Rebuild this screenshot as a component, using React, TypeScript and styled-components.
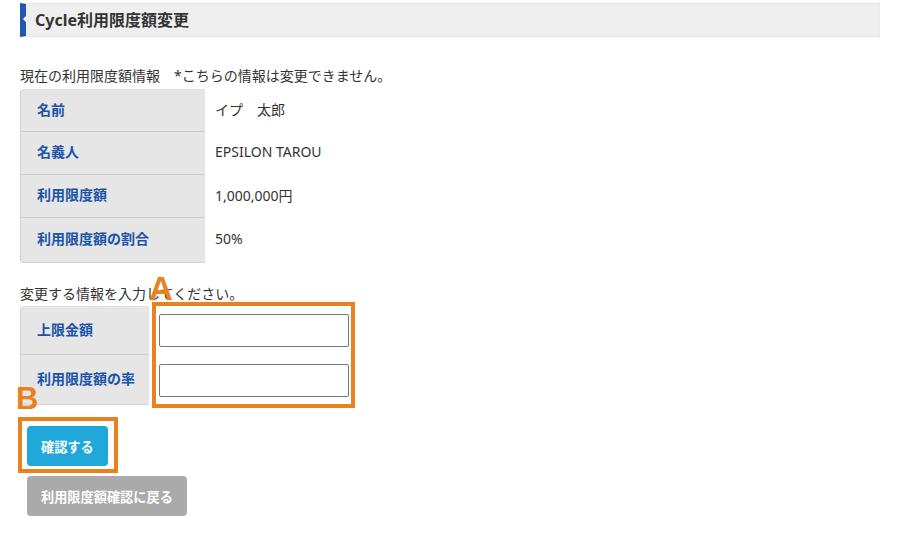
import React from "react";
import styled, { createGlobalStyle } from "styled-components";

const Global = createGlobalStyle`
  html, body { margin: 0; padding: 0; background: #fff; }
  body { font-family: "Noto Sans", "Noto Sans CJK JP", sans-serif; color: #333; }
  * { box-sizing: border-box; }
`;

const Page = styled.div`
  position: relative;
  width: 900px;
  padding: 3px 20px 0 20px;
`;

const Header = styled.div`
  position: relative;
  height: 34px;
  background: #efefef;
  border: 1px solid #e6e6e6;
  border-left: 6px solid #2356ad;
  display: flex;
  align-items: center;
  padding-left: 9px;
  padding-bottom: 1px;
  &::before {
    content: "";
    position: absolute;
    left: -3px;
    top: 12px;
    border-top: 3px solid transparent;
    border-bottom: 3px solid transparent;
    border-right: 3px solid #fff;
  }
`;

const Title = styled.h1`
  margin: 0;
  font-size: 16px;
  font-weight: 700;
  color: #333;
  line-height: 1;
`;

const Note = styled.p<{ $top: number }>`
  margin: ${(p) => p.$top}px 0 0 0;
  font-size: 14px;
  line-height: 20px;
  color: #333;
`;

const Table = styled.div<{ $label: number; $top: number }>`
  margin-top: ${(p) => p.$top}px;
  display: grid;
  grid-template-columns: ${(p) => p.$label}px 1fr;
`;

const Label = styled.div<{ $h: number; $first?: boolean; $last?: boolean }>`
  height: ${(p) => p.$h}px;
  background: #e6e6e6;
  border-left: 1px solid #d0d0d0;
  border-top: ${(p) => (p.$first ? "1px solid #e0e0e0" : "none")};
  border-bottom: 1px solid ${(p) => (p.$last ? "#d4d4d4" : "#cccccc")};
  border-radius: ${(p) => (p.$first ? "4px 0 0 0" : p.$last ? "0 0 0 4px" : "0")};
  display: flex;
  align-items: center;
  padding: 0 0 4px 16px;
  font-size: 14px;
  font-weight: 700;
  color: #1b54a6;
`;

const Value = styled.div<{ $h: number; $pad?: number }>`
  height: ${(p) => p.$h}px;
  display: flex;
  align-items: center;
  padding: 0 0 ${(p) => p.$pad ?? 4}px 10px;
  font-size: 14px;
  color: #333;
`;

const Input = styled.input`
  width: 190px;
  height: 33px;
  border: 1px solid #767676;
  border-radius: 2px;
  background: #fff;
  outline: none;
  padding: 0 6px;
`;

const Buttons = styled.div`
  margin-top: 21px;
  padding-left: 7px;
  display: flex;
  flex-direction: column;
  align-items: flex-start;
  gap: 10px;
`;

const Button = styled.button<{ $variant: "primary" | "back" }>`
  height: 40px;
  padding: 0 14px;
  border: none;
  border-radius: 4px;
  background: ${(p) => (p.$variant === "primary" ? "#21a8da" : "#aaaaaa")};
  color: #fff;
  font-family: "Noto Sans", "Noto Sans CJK JP", sans-serif;
  font-size: 13.2px;
  font-weight: 700;
  cursor: pointer;
`;

const Marker = styled.div<{ $x: number; $y: number; $w: number; $h: number }>`
  position: absolute;
  left: ${(p) => p.$x}px;
  top: ${(p) => p.$y}px;
  width: ${(p) => p.$w}px;
  height: ${(p) => p.$h}px;
  border: 4px solid #e8821e;
  pointer-events: none;
`;

const MarkerLetter = styled.span<{ $x: number; $y: number; $size: number }>`
  position: absolute;
  left: ${(p) => p.$x}px;
  top: ${(p) => p.$y}px;
  font-family: "Liberation Sans", Arial, sans-serif;
  font-weight: 700;
  font-size: ${(p) => p.$size}px;
  line-height: 1;
  color: #e8821e;
  pointer-events: none;
`;

const info = [
  { label: "名前", value: "イプ　太郎", h: 43 },
  { label: "名義人", value: "EPSILON TAROU", h: 43 },
  { label: "利用限度額", value: "1,000,000円", h: 43 },
  { label: "利用限度額の割合", value: "50%", h: 45 },
];

const edits = [
  { label: "上限金額", h: 49 },
  { label: "利用限度額の率", h: 50 },
];

export default function App() {
  return (
    <>
      <Global />
      <Page>
        <Header>
          <Title>Cycle利用限度額変更</Title>
        </Header>
        <Note $top={29}>現在の利用限度額情報　*こちらの情報は変更できません。</Note>
        <Table $label={185} $top={3}>
          {info.map((r, i) => (
            <React.Fragment key={r.label}>
              <Label $h={r.h} $first={i === 0} $last={i === info.length - 1}>
                {r.label}
              </Label>
              <Value $h={r.h}>{r.value}</Value>
            </React.Fragment>
          ))}
        </Table>
        <Note $top={21}>変更する情報を入力してください。</Note>
        <Table $label={129} $top={2}>
          {edits.map((r, i) => (
            <React.Fragment key={r.label}>
              <Label $h={r.h} $first={i === 0} $last={i === edits.length - 1}>
                {r.label}
              </Label>
              <Value $h={r.h} $pad={0}>
                <Input type="text" />
              </Value>
            </React.Fragment>
          ))}
        </Table>
        <Buttons>
          <Button $variant="primary">確認する</Button>
          <Button $variant="back">利用限度額確認に戻る</Button>
        </Buttons>

        <Marker $x={152} $y={302} $w={203} $h={106} />
        <MarkerLetter $x={149} $y={272} $size={33}>A</MarkerLetter>
        <Marker $x={18} $y={417} $w={100} $h={56} />
        <MarkerLetter $x={16} $y={383} $size={31}>B</MarkerLetter>
      </Page>
    </>
  );
}
